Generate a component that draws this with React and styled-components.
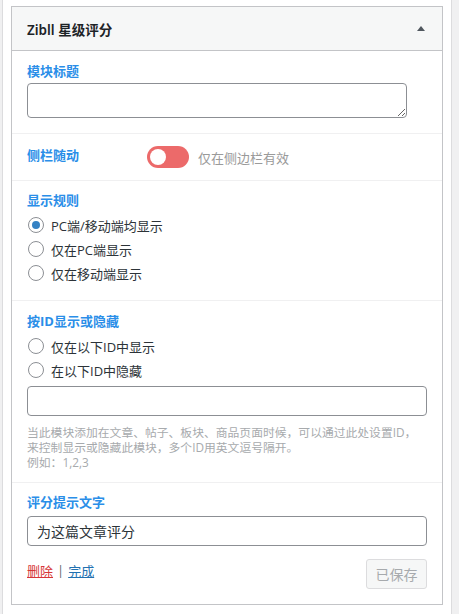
import React from "react";
import styled, { createGlobalStyle } from "styled-components";

const Global = createGlobalStyle`
  html, body { margin: 0; padding: 0; background: #f0f0f1; }
  body {
    font-family: "Open Sans", "Noto Sans CJK SC", sans-serif;
    font-size: 13px;
    color: #3c434a;
  }
  * { box-sizing: border-box; }
`;

const Sidebar = styled.div`
  margin-left: 2px;
  width: 450px;
  min-height: 614px;
  background: #fff;
  border-left: 1px solid #dcdcde;
  border-right: 1px solid #dcdcde;
  padding: 6px 8px 0 8px;
`;

const Widget = styled.div`
  border: 1px solid #c3c4c7;
  background: #fff;
`;

const Header = styled.div`
  height: 44px;
  background: #f6f7f7;
  border-bottom: 1px solid #c3c4c7;
  display: flex;
  align-items: center;
  justify-content: space-between;
  padding: 0 17px 0 15px;
`;

const Title = styled.h3`
  margin: 0;
  font-size: 13.5px;
  font-weight: 600;
  color: #1d2327;
  font-family: "Noto Sans", "Noto Sans CJK SC", sans-serif;
`;

const Section = styled.div`
  padding: ${(p) => p.$pad || "11px 15px 15px"};
  border-bottom: ${(p) => (p.$last ? "none" : "1px solid #f0f0f1")};
  display: ${(p) => (p.$row ? "flex" : "block")};
  align-items: flex-start;
`;

const Label = styled.div`
  font-size: 13px;
  font-weight: 700;
  line-height: 18px;
  color: #2a8ee8;
  width: ${(p) => p.$w || "auto"};
  flex-shrink: 0;
`;

const TextArea = styled.textarea`
  display: block;
  margin-top: 3px;
  width: 380px;
  height: 35px;
  border: 1px solid #8c8f94;
  border-radius: 4px;
  resize: vertical;
  font-family: inherit;
  outline: none;
`;

const Input = styled.input`
  display: block;
  margin-top: ${(p) => p.$mt || "4px"};
  width: 400px;
  height: 30px;
  border: 1px solid #8c8f94;
  border-radius: 4px;
  padding: 0 9px;
  font-size: 14px;
  font-family: "Noto Sans CJK SC", sans-serif;
  color: #2c3338;
  outline: none;
`;

const SwitchWrap = styled.div`
  display: flex;
  align-items: center;
  gap: 9px;
`;

const Switch = styled.div`
  position: relative;
  width: 42px;
  height: 22px;
  border-radius: 11px;
  background: #ec6a6a;
`;

const Knob = styled.span`
  position: absolute;
  left: 3px;
  top: 3px;
  width: 16px;
  height: 16px;
  border-radius: 50%;
  background: #fff;
`;

const Muted = styled.span`
  color: #9a9a9a;
  font-size: 13px;
`;

const RadioList = styled.div`
  margin-top: 4px;
  display: flex;
  flex-direction: column;
`;

const RadioRow = styled.label`
  height: 24px;
  display: flex;
  align-items: center;
  gap: 7px;
  font-size: 13px;
  color: #2c3338;
  padding-left: 1px;
`;

const Circle = styled.span`
  width: 16px;
  height: 16px;
  border-radius: 50%;
  border: 1px solid #8c8f94;
  display: flex;
  align-items: center;
  justify-content: center;
  flex-shrink: 0;
  &::after {
    content: "";
    width: 8px;
    height: 8px;
    border-radius: 50%;
    background: ${(p) => (p.$on ? "#3582c4" : "transparent")};
  }
`;

const Hint = styled.p`
  margin: 9px 0 0;
  font-size: 11.8px;
  line-height: 15px;
  color: #a7aaad;
`;

const Actions = styled.div`
  margin-top: 13px;
  display: flex;
  justify-content: space-between;
  align-items: center;
  width: 400px;
`;

const Links = styled.div`
  font-size: 13px;
  color: #646970;
  display: flex;
  gap: 4px;
  margin-top: -8px;
`;

const Link = styled.a`
  color: ${(p) => p.$c};
  text-decoration: underline;
  cursor: pointer;
`;

const SavedButton = styled.button`
  width: 61px;
  height: 30px;
  border: 1px solid #dcdcde;
  border-radius: 3px;
  background: #f6f7f7;
  color: #a7aaad;
  font-size: 14px;
  font-family: "Noto Sans CJK SC", sans-serif;
  padding: 0;
`;

function Radio({ on, children }) {
  return (
    <RadioRow>
      <Circle $on={on} />
      {children}
    </RadioRow>
  );
}

export default function App() {
  return (
    <>
      <Global />
      <Sidebar>
        <Widget>
          <Header>
            <Title>Zibll 星级评分</Title>
            <svg width="8" height="6" viewBox="0 0 8 6">
              <path d="M0 5 L4 0 L8 5 Z" fill="#50575e" />
            </svg>
          </Header>
          <Section>
            <Label>模块标题</Label>
            <TextArea />
          </Section>
          <Section $row $pad="12px 15px 12px">
            <Label $w="120px">侧栏随动</Label>
            <SwitchWrap>
              <Switch>
                <Knob />
              </Switch>
              <Muted>仅在侧边栏有效</Muted>
            </SwitchWrap>
          </Section>
          <Section $pad="10px 15px 15px">
            <Label>显示规则</Label>
            <RadioList>
              <Radio on>PC端/移动端均显示</Radio>
              <Radio>仅在PC端显示</Radio>
              <Radio>仅在移动端显示</Radio>
            </RadioList>
          </Section>
          <Section $pad="11px 15px 12px">
            <Label>按ID显示或隐藏</Label>
            <RadioList>
              <Radio>仅在以下ID中显示</Radio>
              <Radio>在以下ID中隐藏</Radio>
            </RadioList>
            <Input />
            <Hint>
              当此模块添加在文章、帖子、板块、商品页面时候，可以通过此处设置ID，
              <br />
              来控制显示或隐藏此模块，多个ID用英文逗号隔开。
              <br />
              例如：1,2,3
            </Hint>
          </Section>
          <Section $last $pad="10px 15px 15px">
            <Label>评分提示文字</Label>
            <Input $mt="5px" defaultValue="为这篇文章评分" />
            <Actions>
              <Links>
                <Link $c="#d63638">删除</Link>|<Link $c="#2271b1">完成</Link>
              </Links>
              <SavedButton disabled>已保存</SavedButton>
            </Actions>
          </Section>
        </Widget>
      </Sidebar>
    </>
  );
}
